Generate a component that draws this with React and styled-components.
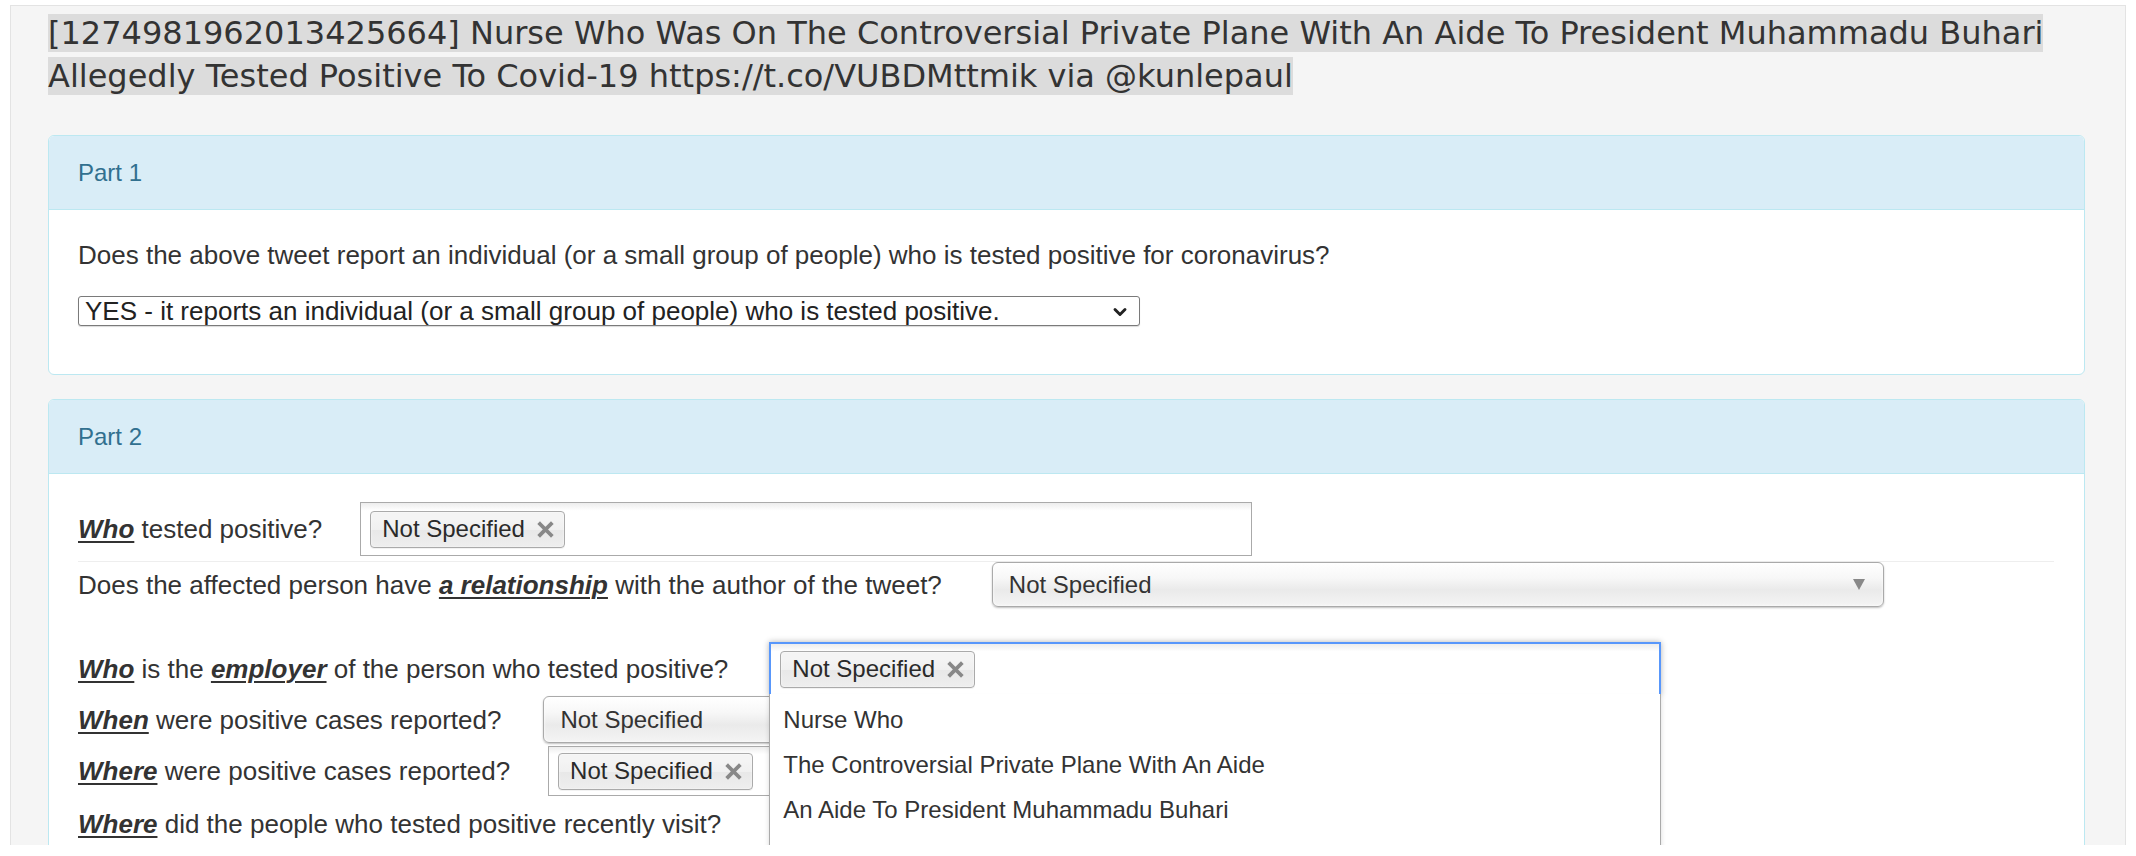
import React from "react";
import styled, { createGlobalStyle } from "styled-components";
import { ChevronDown } from "lucide-react";

const GlobalStyle = createGlobalStyle`
  html, body {
    margin: 0;
    padding: 0;
    background: #fff;
  }
  * {
    box-sizing: border-box;
  }
`;

const CONTROL_WIDTH = 892;

const Page = styled.div`
  height: 856px;
  padding: 5px 10px 11px 10px;
  overflow: hidden;
  font-family: "Liberation Sans", Arial, sans-serif;
  font-size: 26px;
  color: #333;
`;

const Well = styled.div`
  height: 100%;
  overflow: hidden;
  background: #f5f5f5;
  border: 1px solid #e3e3e3;
  border-bottom: none;
  padding: 6px 40px 0 37px;
`;

const Title = styled.h3`
  margin: 0;
  font-family: "DejaVu Sans", Verdana, sans-serif;
  font-weight: normal;
  font-size: 32px;
  line-height: 43px;
  color: #333;
`;

const Highlight = styled.span`
  background: #dcdcdc;
`;

const Panel = styled.section`
  margin-top: ${({ $gap }) => $gap}px;
  background: #fff;
  border: 1px solid #bce8f1;
  border-radius: 6px;
  overflow: ${({ $open }) => ($open ? "visible" : "hidden")};
`;

const PanelHeading = styled.div`
  height: 74px;
  display: flex;
  align-items: center;
  padding: 0 29px;
  background: #d9edf7;
  border-bottom: 1px solid #bce8f1;
  border-radius: 5px 5px 0 0;
  color: #31708f;
  font-size: 24px;
`;

const PanelBody = styled.div`
  padding: 28px 29px ${({ $bottom }) => $bottom}px 29px;
`;

const Question = styled.p`
  margin: 0;
  line-height: 34px;
`;

const SelectWrap = styled.div`
  position: relative;
  width: 1062px;
  margin-top: 24px;
`;

const NativeSelect = styled.select`
  appearance: none;
  width: 100%;
  height: 30px;
  padding: 0 40px 0 6px;
  font-family: "Liberation Sans", Arial, sans-serif;
  font-size: 26px;
  line-height: 28px;
  color: #222;
  background: #fff;
  border: 1px solid #7a7a7a;
  border-radius: 3px;
  box-shadow: 0 1px 1px rgba(0, 0, 0, 0.15);
`;

const Chevron = styled.span`
  position: absolute;
  right: 10px;
  top: 50%;
  transform: translateY(-50%);
  display: flex;
  color: #222;
  pointer-events: none;
`;

const Row = styled.div`
  display: flex;
  align-items: center;
  gap: ${({ $gap }) => $gap}px;
  min-height: ${({ $h }) => $h}px;
  margin-top: ${({ $top }) => $top || 0}px;
`;

const Label = styled.span`
  white-space: nowrap;
  line-height: 30px;
`;

const Key = styled.em`
  font-weight: bold;
  text-decoration: underline;
  text-decoration-thickness: 2px;
  text-underline-offset: 3px;
`;

const Divider = styled.hr`
  margin: 5px 0 0 0;
  border: 0;
  border-top: 1px solid #eee;
  width: 1976px;
`;

const Multi = styled.div`
  position: relative;
  width: ${CONTROL_WIDTH}px;
  height: ${({ $h }) => $h}px;
  display: flex;
  align-items: center;
  padding-left: 9px;
  font-size: 24px;
  background: #fff;
  background-image: linear-gradient(to bottom, #eee 1%, #fff 15%);
  border: ${({ $focus }) => ($focus ? "2px solid #5897fb" : "1px solid #aaa")};
  box-shadow: ${({ $focus }) =>
    $focus ? "0 0 6px rgba(0, 0, 0, 0.3)" : "none"};
  z-index: ${({ $focus }) => ($focus ? 5 : 1)};
`;

const Tag = styled.span`
  display: inline-flex;
  align-items: center;
  gap: 12px;
  height: 37px;
  padding: 0 10px 0 11px;
  color: #2a2a2a;
  border: 1px solid #aaa;
  border-radius: 4px;
  background-image: linear-gradient(to bottom, #f4f4f4 20%, #f0f0f0 50%, #e8e8e8 52%, #eee 100%);
  box-shadow: 0 0 2px #fff inset, 0 1px 0 rgba(0, 0, 0, 0.05);
  line-height: 1;
`;

const Single = styled.div`
  width: ${CONTROL_WIDTH}px;
  height: ${({ $h }) => $h}px;
  display: flex;
  align-items: center;
  justify-content: space-between;
  padding: 0 18px 0 16px;
  font-size: 24px;
  color: #333;
  border: 1px solid #aaa;
  border-radius: 6px;
  background-image: linear-gradient(
    to bottom,
    #fff 0%,
    #f7f7f7 35%,
    #eaeaea 62%,
    #f4f4f4 100%
  );
  box-shadow: 0 1px 2px rgba(0, 0, 0, 0.25), 0 0 3px #fff inset;
`;

const Caret = styled.span`
  width: 0;
  height: 0;
  border-left: 6px solid transparent;
  border-right: 6px solid transparent;
  border-top: 11px solid #888;
`;

const Dropdown = styled.ul`
  position: absolute;
  top: 100%;
  left: -2px;
  width: ${CONTROL_WIDTH}px;
  margin: 0;
  padding: 3px 0 0 0;
  list-style: none;
  background: #fff;
  border: 1px solid #aaa;
  border-top: 0;
  box-shadow: 0 4px 5px rgba(0, 0, 0, 0.15);
  height: 200px;
`;

const Option = styled.li`
  height: 45px;
  line-height: 45px;
  padding: 0 13px;
  color: #333;
`;

const CloseIcon = () => (
  <svg width="17" height="17" viewBox="0 0 17 17" aria-hidden="true">
    <path
      d="M3 3 L14 14 M14 3 L3 14"
      stroke="#888"
      strokeWidth="3.8"
      strokeLinecap="square"
    />
  </svg>
);

const Chip = ({ children }) => (
  <Tag>
    {children}
    <CloseIcon />
  </Tag>
);

const App = () => {
  const options = [
    "Nurse Who",
    "The Controversial Private Plane With An Aide",
    "An Aide To President Muhammadu Buhari",
  ];

  return (
    <Page>
      <GlobalStyle />
      <Well>
        <Title>
          <Highlight>
            [1274981962013425664] Nurse Who Was On The Controversial Private
            Plane With An Aide To President Muhammadu Buhari Allegedly Tested
            Positive To Covid-19 https://t.co/VUBDMttmik via @kunlepaul
          </Highlight>
        </Title>

        <Panel $gap={37}>
          <PanelHeading>Part 1</PanelHeading>
          <PanelBody $bottom={47}>
            <Question>
              Does the above tweet report an individual (or a small group of
              people) who is tested positive for coronavirus?
            </Question>
            <SelectWrap>
              <NativeSelect defaultValue="yes">
                <option value="yes">
                  YES - it reports an individual (or a small group of people)
                  who is tested positive.
                </option>
                <option value="no">NO</option>
              </NativeSelect>
              <Chevron>
                <ChevronDown size={20} strokeWidth={3.5} />
              </Chevron>
            </SelectWrap>
          </PanelBody>
        </Panel>

        <Panel $gap={24} $open>
          <PanelHeading>Part 2</PanelHeading>
          <PanelBody $bottom={40}>
            <Row $gap={38} $h={54}>
              <Label>
                <Key>Who</Key> tested positive?
              </Label>
              <Multi $h={54}>
                <Chip>Not Specified</Chip>
              </Multi>
            </Row>
            <Divider />
            <Row $gap={50} $h={45}>
              <Label>
                Does the affected person have <Key>a relationship</Key> with the
                author of the tweet?
              </Label>
              <Single $h={45}>
                Not Specified
                <Caret />
              </Single>
            </Row>
            <Row $gap={41} $h={54} $top={35}>
              <Label>
                <Key>Who</Key> is the <Key>employer</Key> of the person who
                tested positive?
              </Label>
              <Multi $h={54} $focus>
                <Chip>Not Specified</Chip>
                <Dropdown>
                  {options.map((o) => (
                    <Option key={o}>{o}</Option>
                  ))}
                </Dropdown>
              </Multi>
            </Row>
            <Row $gap={42} $h={47}>
              <Label>
                <Key>When</Key> were positive cases reported?
              </Label>
              <Single $h={47}>
                Not Specified
                <Caret />
              </Single>
            </Row>
            <Row $gap={38} $h={50} $top={3}>
              <Label>
                <Key>Where</Key> were positive cases reported?
              </Label>
              <Multi $h={50}>
                <Chip>Not Specified</Chip>
              </Multi>
            </Row>
            <Row $gap={38} $h={50} $top={3}>
              <Label>
                <Key>Where</Key> did the people who tested positive recently
                visit?
              </Label>
            </Row>
          </PanelBody>
        </Panel>
      </Well>
    </Page>
  );
};

export default App;
